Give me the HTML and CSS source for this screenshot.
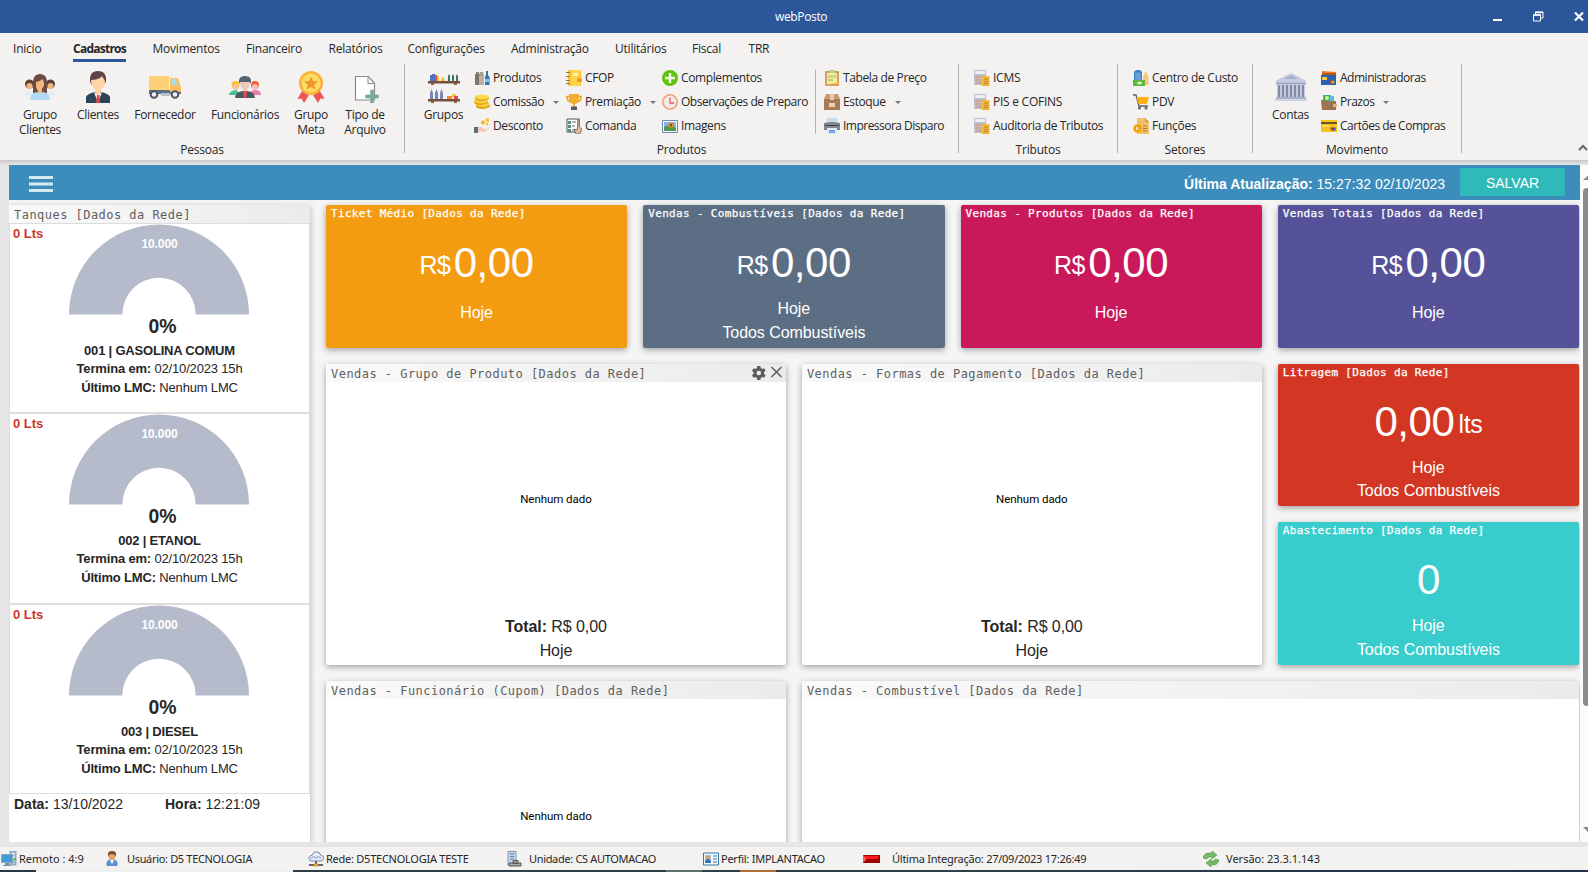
FILE: index.html
```html
<!DOCTYPE html>
<html lang="pt-BR">
<head>
<meta charset="utf-8">
<title>webPosto</title>
<link rel="stylesheet" href="styles.css">
</head>
<body>
<svg class="defs" width="0" height="0" aria-hidden="true">
  <symbol id="calc" viewBox="0 0 16 16"><rect width="12" height="15" rx="1" fill="#b9bfcb"/><rect x="1" y="1" width="10" height="3" fill="#eaf0f7"/><path d="M2 6h2v2H2zm3 0h2v2H5zm3 0h2v2H8zM2 9h2v2H2zm3 0h2v2H5zM2 12h2v2H2zm3 0h2v2H5z" fill="#d99a86"/><path d="M9 6h6.500v10H8V7z" fill="#f0b53a"/><path d="M10 9h4M10 11.500h4M10 13.500h4" stroke="#b88a3a"/></symbol>
  <symbol id="gauge" viewBox="0 0 182 91"><path d="M1 90.500a90 90 0 0 1 180 0h-53.300a36.700 36.700 0 0 0-73.400 0z" fill="#b5bbca"/></symbol>
</svg>
<header class="titlebar">
  <span class="app-name">webPosto</span>
  <svg class="win" width="94" height="12" viewBox="0 0 94 12"><path d="M0 8h9v2H0z" fill="#fff"/><path d="M42.500 3V1H50v6h-2M40.500 4h7v6h-7z" fill="none" stroke="#fff"/><path d="M40 4h8M42 1.500h8" stroke="#fff" stroke-width="1.500"/><path d="M82 1.500l8 8m0-8l-8 8" stroke="#fff" stroke-width="2.200"/></svg>
</header>
<nav class="tabs">
  <span>Inicio</span><span><b>Cadastros</b></span><span>Movimentos</span><span>Financeiro</span><span>Relatórios</span><span>Configurações</span><span>Administração</span><span>Utilitários</span><span>Fiscal</span><span>TRR</span>
</nav>
<section class="ribbon">
  <div class="group pessoas">
    <div class="tools">
      <div class="big"><svg viewBox="0 0 32 32"><circle cx="5.500" cy="13" r="4.500" fill="#5d4037"/><circle cx="5.500" cy="15" r="3" fill="#f2b880"/><path d="M1 25q0-5 5-5h4v5z" fill="#e6edf5"/><circle cx="26.500" cy="13" r="4.500" fill="#5d4037"/><circle cx="26.500" cy="15" r="3" fill="#f2b880"/><path d="M31 25q0-5-5-5h-4v5z" fill="#e6edf5"/><path d="M9 22V10q1-7 7-7t7 7v12z" fill="#6d4c41"/><path d="M12 11q5-1 6-3 2 1 2 5t-4 6-4-6zm2 6h4v5h-4z" fill="#f2b880"/><path d="M6 29q0-7 7-8 3 2 6 0 7 1 7 8z" fill="#b3daf5"/></svg><span>Grupo<br>Clientes</span></div>
      <div class="big"><svg viewBox="0 0 32 32"><path d="M8 11q-1-11 8-11t8 11l-3 3H10z" fill="#5d4545"/><path d="M9 9q8 0 11-4l3 5q0 6-4 8v6h-6v-6q-4-3-4-9z" fill="#ffd2a8"/><path d="M4 32v-6q1-3 9-5l3 4 3-4q8 2 9 5v6z" fill="#2d4356"/><path d="M12 21l4 11 4-11-4 3z" fill="#fff"/><path d="M15 24h2.500l.5 8h-4z" fill="#e8453c"/></svg><span>Clientes</span></div>
      <div class="big"><svg viewBox="0 0 32 32"><path d="M0 5h20v15H0z" fill="#ffd176"/><path d="M0 19h32v4H0z" fill="#5d7083"/><path d="M21 7h8l3 10v4H21z" fill="#ffbd5c"/><path d="M22.500 8h4.500l1 6h-5.500z" fill="#a9dcf5"/><circle cx="5" cy="23.500" r="3.300" fill="#eef" stroke="#4c5566" stroke-width="2"/><circle cx="26" cy="23.500" r="3.300" fill="#eef" stroke="#4c5566" stroke-width="2"/><path d="M12 22h9v3h-9z" fill="#b9bfcc"/></svg><span>Fornecedor</span></div>
      <div class="big"><svg viewBox="0 0 32 32"><circle cx="6.500" cy="14" r="4" fill="#fcc12d"/><circle cx="6.500" cy="16" r="3" fill="#eec2b4"/><path d="M0 24q0-4 7-5l6 5z" fill="#3fc48c"/><circle cx="26" cy="14" r="4" fill="#f4593b"/><circle cx="26" cy="16" r="3" fill="#eec2b4"/><path d="M20 24q2-5 6-5 6 0 6 5z" fill="#ef7cb5"/><path d="M10 12q-1-7 6-7t6 7z" fill="#53626c"/><path d="M11 11h10q0 5-3 7v4h-4v-4q-3-2-3-7z" fill="#edc7b7"/><path d="M6 27q0-6 8-7l2 2 2-2q8 1 8 7z" fill="#4b5662"/><path d="M14 20h4l-1 7h-2z" fill="#e94d4d"/></svg><span>Funcionários</span></div>
      <div class="big"><svg viewBox="0 0 32 32"><path d="M7 20L2.500 28l4-.5L9 32l5-8zM25 20l4.500 8-4-.5L23 32l-5-8z" fill="#eb5757"/><circle cx="16" cy="12" r="12" fill="#fbb13c"/><circle cx="16" cy="12" r="9.500" fill="#ffdb66"/><path d="M16 5.500l2 4.600 5 .4-3.800 3.200 1.200 4.900-4.400-2.600-4.400 2.600 1.200-4.900L9 10.500l5-.4z" fill="#ee962b"/></svg><span>Grupo<br>Meta</span></div>
      <div class="big"><svg viewBox="0 0 32 32"><path d="M6.500 5.500h13l6 7V29h-19z" fill="#fff" stroke="#8a8a8a" stroke-width="1.200"/><path d="M19 5.500v7h6.500" fill="none" stroke="#8a8a8a"/><path d="M21.500 19h3v5h5v3h-5v5h-3v-5h-5v-3h5z" fill="#76aa98" stroke="#76aa98" stroke-width=".6"/></svg><span>Tipo de<br>Arquivo</span></div>
    </div>
    <h2>Pessoas</h2>
  </div>
  <div class="group produtos">
    <div class="tools">
      <div class="big"><svg viewBox="0 0 32 32"><path d="M0 10h32v2.500H0zM0 28h32v2.500H0z" fill="#76503b"/><path d="M3 12h3v2H3zm23 0h3v2h-3zM3 30h3v2H3zm23 0h3v2h-3z" fill="#8d6249"/><path d="M2 4h3v6H2z" fill="#4a77cc"/><path d="M4 3h3v7H4z" fill="#4a77cc"/><path d="M7 4h2v6H7z" fill="#e64a4a"/><path d="M9 5h2v5H9z" fill="#f4c430"/><path d="M13 10l1-4h1l2 4z" fill="#f2b92b"/><path d="M20 10V5l1-2 1 2v5zm4 0V5l1-2 1 2v5zm4 0V5l1-2 1 2v5z" fill="#3e7562"/><path d="M2 28v-6l1.500-4L5 22v6zm5 0v-6l1.500-4 1.500 4v6zm5 0v-6l1.500-4 1.500 4v6z" fill="#7787bb"/><path d="M19 28v-3h5v3z" fill="#f28a37"/><path d="M24 26v-3h4v3z" fill="#f5c536"/><path d="M26 28v-3h4v3z" fill="#dd4b5a"/></svg><span>Grupos</span></div>
      <div class="stack c1">
        <div><svg viewBox="0 0 16 16"><path d="M1 4h5v11H1z" fill="#7b756b"/><path d="M2 2h3v2H2z" fill="#8b8579"/><path d="M5 6h5v9H5z" fill="#bcaea0"/><path d="M6 2h3l1 4H5z" fill="#a99d8f"/><path d="M11 15V7l1-2V1h2v4l1.500 2v8z" fill="#2f76b5"/><path d="M11 9h4v3h-4z" fill="#8cc1e8"/></svg>Produtos</div>
        <div><svg viewBox="0 0 16 16"><path d="M2 10v3q5 4 14 0v-3z" fill="#dca313"/><ellipse cx="9" cy="10.500" rx="7" ry="2.500" fill="#f9cf41"/><path d="M0 7v2q5 4 14 0V7z" fill="#dca313"/><ellipse cx="7" cy="7" rx="7" ry="2.500" fill="#f9cf41"/><path d="M1 3v2q5 4 14 0V3z" fill="#dca313"/><ellipse cx="8" cy="3" rx="7" ry="2.600" fill="#ffd84e"/></svg>Comissão<i></i></div>
        <div><svg viewBox="0 0 16 16"><path d="M0 9h4v6H0z" fill="#5d6b7a"/><path d="M4 9h3l3 2h2l4-2-5 5H4z" fill="#f8c9b5"/><circle cx="9" cy="4.500" r="2" fill="#f5b62e"/><circle cx="13.500" cy="2" r="1.900" fill="#f8c33c"/><circle cx="13" cy="6" r="1.200" fill="#f5b62e"/></svg>Desconto</div>
      </div>
      <div class="stack c2">
        <div><svg viewBox="0 0 16 16"><rect x="2" y="0" width="13" height="16" rx="1" fill="#fbc229"/><path d="M5 0h9v16H5z" fill="#ffd34c"/><path d="M7 3h5v3H7z" fill="#fff2b8"/><path d="M0 2h4v1H0zm0 4h4v1H0zm0 4h4v1H0zm0 3h4v1H0z" fill="#777"/><rect x="11" y="8" width="5" height="4" rx="1" fill="#f39c1f"/></svg>CFOP</div>
        <div><svg viewBox="0 0 16 16"><path d="M3 2.500H.8q0 5 4.700 5.500M13 2.500h2.200q0 5-4.700 5.500" fill="none" stroke="#eba32a" stroke-width="1.500"/><path d="M3 0h10v4q0 5-4 6v3H7v-3q-4-1-4-6z" fill="#f4ae2f"/><path d="M5 12.500h6V16H5z" fill="#565c63"/></svg>Premiação<i></i></div>
        <div><svg viewBox="0 0 16 16"><path d="M1 1h11v13H1z" fill="#fff" stroke="#47575e"/><path d="M2 3h3v3H2zm0 4h3v3H2zm0 4h3v3H2z" fill="#5d8c78"/><path d="M6 4h4M6 8h3M6 12h3" stroke="#666"/><path d="M12 6V1h1.500v8L16 11l-2 5h-4l-2-5 3 1z" fill="#e8bc9c" stroke="#555" stroke-width=".7"/></svg>Comanda</div>
      </div>
      <div class="stack c3">
        <div><svg viewBox="0 0 16 16"><circle cx="8" cy="8" r="8" fill="#5fc410"/><path d="M8 3v10M3 8h10" stroke="#f1fbe8" stroke-width="2.400"/></svg>Complementos</div>
        <div><svg viewBox="0 0 16 16"><circle cx="8" cy="8" r="7.200" fill="#f3e9e5" stroke="#f0a070" stroke-width="1.500"/><path d="M8 3.500V9h4" fill="none" stroke="#e06057" stroke-width="1.300"/></svg>Observações de Preparo</div>
        <div><svg viewBox="0 0 16 16"><path d="M.5 2.500h15v12H.5z" fill="#fff" stroke="#7284b4"/><path d="M2 4h12v9H2z" fill="#7db8e5"/><path d="M2 9q4-3 6 0 3-2 6 1v3H2z" fill="#4e9a48"/><circle cx="9" cy="7" r="2.700" fill="#e38628"/><circle cx="9" cy="7" r="1" fill="#613918"/></svg>Imagens</div>
      </div>
      <div class="stack c4">
        <div><svg viewBox="0 0 16 16"><rect x="1" y="1" width="14" height="15" rx="1" fill="#dc9e5d"/><path d="M3 3h10v11H3z" fill="#f6ee9f"/><path d="M5 0h6v3H5z" fill="#b5d38a"/><path d="M5 5v3m3-3v3m3-3v3M4 10h5" stroke="#7cac56"/><path d="M6 14l8-2v2z" fill="#f5c644"/></svg>Tabela de Preço</div>
        <div><svg viewBox="0 0 16 16"><path d="M0 5h16v11H0z" fill="#a97c58"/><path d="M2 0h12l2 5H0z" fill="#c89b76"/><path d="M6 0h4v6H6z" fill="#f0c9a8"/><path d="M5 9h6v4H5z" fill="#e8cfb6"/></svg>Estoque<i></i></div>
        <div><svg viewBox="0 0 16 16"><path d="M3 0h10v6H3z" fill="#c7ddf2"/><path d="M0 5q8-2 16 0v7H0z" fill="#83868c"/><path d="M1 7h14v1H1z" fill="#3f434a"/><path d="M3 10h10v6H3z" fill="#dceafa"/><path d="M5 12h6v3H5z" fill="#75a5e5"/></svg>Impressora Disparo</div>
      </div>
    </div>
    <h2>Produtos</h2>
  </div>
  <div class="group tributos">
    <div class="tools"><div class="stack">
      <div><svg><use href="#calc"/></svg>ICMS</div>
      <div><svg><use href="#calc"/></svg>PIS e COFINS</div>
      <div><svg><use href="#calc"/></svg>Auditoria de Tributos</div>
    </div></div>
    <h2>Tributos</h2>
  </div>
  <div class="group setores">
    <div class="tools"><div class="stack">
      <div><svg viewBox="0 0 16 16"><path d="M1 11V3q0-3 4-3t4 3v8z" fill="#3a7fc4"/><path d="M3 3v7m2-8v8m2-7v7" stroke="#a4cdf0" stroke-width=".8"/><path d="M10 15V7l2.500-6L15.500 7v8z" fill="#fac27a"/><path d="M0 10h12v6H0z" fill="#62b63c"/><path d="M4 13h5M6.500 11.500v3" stroke="#e9f6e3" stroke-width="1.300"/></svg>Centro de Custo</div>
      <div><svg viewBox="0 0 16 16"><path d="M0 1h3l3 11h9" fill="none" stroke="#566069" stroke-width="1.300"/><path d="M3.500 3H16l-2 7H5.500z" fill="#ffae13"/><circle cx="6.500" cy="14" r="1.500" fill="#5d6770"/><circle cx="13" cy="14" r="1.500" fill="#5d6770"/></svg>PDV</div>
      <div><svg viewBox="0 0 16 16"><path d="M4 0h8l4 4v12H4z" fill="#f1c06b"/><path d="M12 0v4h4z" fill="#d99c3e"/><path d="M10 8h4M10 10.500h4M10 13h4" stroke="#a67a3a"/><circle cx="4.500" cy="10.500" r="3" fill="none" stroke="#f6a000" stroke-width="2.600"/></svg>Funções</div>
    </div></div>
    <h2>Setores</h2>
  </div>
  <div class="group movimento">
    <div class="tools">
      <div class="big"><svg viewBox="0 0 32 32"><path d="M16 2l15 7.500v2H1v-2z" fill="#c6cde1"/><path d="M16 4l7 4H9z" fill="#a7b0ca"/><path d="M1 11.500h30v2H1z" fill="#9ba4be"/><path d="M2 13h28v13H2z" fill="#c3cade"/><path d="M4 14v12m4-12v12m4-12v12m4-12v12m4-12v12m4-12v12m4-12v12" stroke="#818ba6" stroke-width="2"/><path d="M1 26h30v2H1z" fill="#a9b2c8"/><path d="M0 28h32v2H0z" fill="#ccd3e2"/></svg><span>Contas</span></div>
      <div class="stack">
        <div><svg viewBox="0 0 16 16"><path d="M1 1l14 1v7H1z" fill="#ef7d22"/><path d="M1 3h14v2H1z" fill="#b8551a"/><path d="M0 5h15v10H0z" fill="#2d62ab"/><path d="M1 7h5v3H1z" fill="#f5cc42"/><circle cx="10" cy="12" r="1.500" fill="#e43c35"/><circle cx="12" cy="12" r="1.500" fill="#f3a62c"/></svg>Administradoras</div>
        <div><svg viewBox="0 0 16 16"><path d="M2 1h8v7H2z" fill="#34b67a"/><circle cx="6" cy="4" r="2" fill="#e4f46c"/><path d="M9 2h4v6H9z" fill="#63b9e6"/><path d="M0 6h3l1 1h11v9H1z" fill="#9a7453"/><path d="M12 10h4v3h-4z" fill="#d7b390"/></svg>Prazos<i></i></div>
        <div><svg viewBox="0 0 16 16"><path d="M0 2h16v12H0z" fill="#f4c31c"/><path d="M0 4h16v2H0z" fill="#6d5528"/><path d="M1 8h7" stroke="#fff0a0"/><circle cx="11" cy="11" r="1.800" fill="#e2432b"/><circle cx="13" cy="11" r="1.800" fill="#355fa8"/></svg>Cartões de Compras</div>
      </div>
    </div>
    <h2>Movimento</h2>
  </div>
  <svg class="collapse" width="10" height="8" viewBox="0 0 10 8"><path d="M1 6l4-4 4 4" fill="none" stroke="#666" stroke-width="2"/></svg>
</section>
<div class="workspace">
  <main>
    <div class="bar">
      <svg width="24" height="16"><path d="M0 0h24v3H0zM0 6.500h24v3H0zM0 13h24v3H0z" fill="#d8e8f1"/></svg>
      <p><b>Última Atualização:</b> 15:27:32 02/10/2023</p>
      <button>SALVAR</button>
    </div>
    <div class="board">
      <aside class="tanks">
        <h3>Tanques [Dados da Rede]</h3>
        <div class="tank"><em>0 Lts</em><svg><use href="#gauge"/></svg><small>10.000</small><strong>0%</strong><b>001 | GASOLINA COMUM</b><p><b>Termina em:</b> 02/10/2023 15h</p><p><b>Último LMC:</b> Nenhum LMC</p></div>
        <div class="tank"><em>0 Lts</em><svg><use href="#gauge"/></svg><small>10.000</small><strong>0%</strong><b>002 | ETANOL</b><p><b>Termina em:</b> 02/10/2023 15h</p><p><b>Último LMC:</b> Nenhum LMC</p></div>
        <div class="tank"><em>0 Lts</em><svg><use href="#gauge"/></svg><small>10.000</small><strong>0%</strong><b>003 | DIESEL</b><p><b>Termina em:</b> 02/10/2023 15h</p><p><b>Último LMC:</b> Nenhum LMC</p></div>
        <div class="clock"><span><b>Data:</b> 13/10/2022</span><span><b>Hora:</b> 12:21:09</span></div>
      </aside>
      <div class="cards">
        <article class="metric orange"><h4>Ticket Médio [Dados da Rede]</h4><div class="value"><sup>R$</sup>0,00</div><p>Hoje</p></article>
        <article class="metric slate two"><h4>Vendas - Combustíveis [Dados da Rede]</h4><div class="value"><sup>R$</sup>0,00</div><p>Hoje<br>Todos Combustíveis</p></article>
        <article class="metric pink"><h4>Vendas - Produtos [Dados da Rede]</h4><div class="value"><sup>R$</sup>0,00</div><p>Hoje</p></article>
        <article class="metric purple"><h4>Vendas Totais [Dados da Rede]</h4><div class="value"><sup>R$</sup>0,00</div><p>Hoje</p></article>
        <article class="panel tall"><h3>Vendas - Grupo de Produto [Dados da Rede]
          <svg width="31" height="14" viewBox="0 0 31 14"><path d="M5.300 0h3l.5 2.100 1.300.8 2-.7 1.500 2.600-1.600 1.400v1.600l1.600 1.400-1.500 2.600-2-.7-1.300.8-.5 2.100h-3l-.5-2.100-1.300-.8-2 .7L0 9.200l1.600-1.400V6.200L0 4.800l1.500-2.600 2 .7 1.300-.8zM6.800 4.700a2.300 2.300 0 1 0 0 4.600 2.300 2.300 0 0 0 0-4.600z" fill="#5c5c5c" fill-rule="evenodd"/><path d="M19.500 1l10 10m0-10l-10 10" stroke="#5c5c5c" stroke-width="1.500"/></svg></h3>
          <div class="empty">Nenhum dado</div><p><b>Total:</b> R$ 0,00<br>Hoje</p></article>
        <article class="panel tall"><h3>Vendas - Formas de Pagamento [Dados da Rede]</h3><div class="empty">Nenhum dado</div><p><b>Total:</b> R$ 0,00<br>Hoje</p></article>
        <article class="metric red two"><h4>Litragem [Dados da Rede]</h4><div class="value">0,00<sup>lts</sup></div><p>Hoje<br>Todos Combustíveis</p></article>
        <article class="metric teal two"><h4>Abastecimento [Dados da Rede]</h4><div class="value">0</div><p>Hoje<br>Todos Combustíveis</p></article>
        <article class="panel tall"><h3>Vendas - Funcionário (Cupom) [Dados da Rede]</h3><div class="empty">Nenhum dado</div></article>
        <article class="panel wide"><h3>Vendas - Combustível [Dados da Rede]</h3></article>
      </div>
    </div>
  </main>
  <div class="scroll"><svg width="8" height="5"><path d="M3 5l6-5v5z" fill="#888"/></svg><div class="thumb"></div><svg width="8" height="5"><path d="M3 0h6v6z" fill="#888"/></svg></div>
</div>
<footer class="status">
  <span><svg viewBox="0 0 16 16"><path d="M9 0h6v14H9z" fill="#a9bdd2" stroke="#6e88a5" stroke-width=".7"/><path d="M10 3h4M10 6h4" stroke="#fff"/><path d="M.5 3.500h11v8H.5z" fill="#419bd9" stroke="#8fa5ba"/><path d="M4 12h4v2h2v1H2v-1h2z" fill="#7891aa"/><path d="M13 7h1.500v2H13z" fill="#35be35"/></svg>Remoto : 4:9</span>
  <span><svg viewBox="0 0 16 16"><path d="M3 14.500q-1-6 5-6t5 6z" fill="#5597d8" stroke="#336b9f" stroke-width=".6"/><path d="M6 9h4l-2 4z" fill="#fff"/><circle cx="8" cy="5" r="3.700" fill="#e5a56a"/><path d="M4 5q-1-5 4-5t4 5q-2-2-5-2z" fill="#80502a"/></svg>Usuário: D5 TECNOLOGIA</span>
  <span><svg viewBox="0 0 16 16"><path d="M3 10q-3-1-2-3.500Q2 4 4 4.500q1-4 5-3.500 3 0 3.500 3Q16 4.500 15.500 7.500q-.5 2.500-3 2.500z" fill="#e5eafa" stroke="#7685b0"/><path d="M3 8q2-4 5-1 2-3 5 0" fill="none" stroke="#8996bf"/><path d="M8 10v3M1 14h14" stroke="#666" stroke-width="2"/><path d="M6 12.500h4v3H6z" fill="#ec9a28"/></svg>Rede: D5TECNOLOGIA TESTE</span>
  <span><svg viewBox="0 0 16 16"><path d="M2 .5h8V14H2z" fill="#c5d5e7" stroke="#8399b2"/><path d="M4 3h4M4 5.500h4M4 8h4" stroke="#5c7da2"/><path d="M3 12h12v3H3zM7 9.500h5v3H7z" fill="#aaa" stroke="#555"/></svg>Unidade: CS AUTOMACAO</span>
  <span><svg viewBox="0 0 16 16"><path d="M.5 2h15v12H.5z" fill="#f4f8fc" stroke="#347caa"/><path d="M2 4h6v8H2z" fill="#9fc8ec"/><circle cx="5" cy="6.500" r="2" fill="#dc9652"/><path d="M2 12q0-4 3-4t3 4z" fill="#2e74b8"/><path d="M10 5h4M10 8h4M10 11h4" stroke="#4b7090"/></svg>Perfil: IMPLANTACAO</span>
  <span><svg class="led" viewBox="0 0 17 8"><path d="M0 0h17v8H0z" fill="#9c0000"/><path d="M1 1h15l-2 3H3z" fill="#ff1a1a"/><path d="M0 0l3 3v2L0 8z" fill="#f55"/></svg>Última Integração: 27/09/2023 17:26:49</span>
  <span><svg viewBox="0 0 16 16"><path d="M0 7q1-5 6-5h3V0l5 4-5 4V6H7Q4 6 4 8z" fill="#72bb67" stroke="#3d873a" stroke-width=".5"/><path d="M16 9q-1 5-6 5H8v2l-5-4 5-4v2h1q3 0 3-2z" fill="#72bb67" stroke="#3d873a" stroke-width=".5"/></svg>Versão: 23.3.1.143</span>
</footer>
<div class="taskbar"></div>
</body>
</html>
```
FILE: styles.css
```css
* { box-sizing: border-box; }
body { margin: 0; width: 1588px; height: 872px; overflow: hidden; display: flex; flex-direction: column; background: #e6e6e6; color: #262626; font: 12px/15px "Open Sans", sans-serif; }
h2, h3, h4, p { margin: 0; font-weight: normal; }
svg { display: block; flex: none; }
.defs { position: absolute; }
.titlebar { height: 33px; flex: none; background: #2b579a; color: #fff; display: grid; grid-template-columns: 1493px 95px; align-items: center; }
.app-name { padding-left: 775px; letter-spacing: -.35px; }
.win { margin-top: 1px; }
.tabs { height: 31px; flex: none; background: #f3f2f1; padding: 8px 0 0 13px; display: grid; grid-template-columns: 60px 79.500px 93.500px 82.500px 79px 103.500px 104px 77px 56.500px 40px; white-space: nowrap; letter-spacing: -.22px; }
.tabs b { display: inline-block; height: 21px; width: 53px; border-bottom: 3px solid #2b579a; letter-spacing: -.75px; }
.ribbon { height: 96px; flex: none; background: #f3f2f1; display: flex; position: relative; white-space: nowrap; letter-spacing: -.2px; }
.group { height: 89px; border-right: 1px solid #b4b4b4; display: flex; flex-direction: column; }
.group h2 { font-size: 12px; line-height: 15px; text-align: center; margin-top: auto; margin-bottom: -4px; }
.tools { display: flex; height: 76px; padding-top: 7px; }
.big { display: flex; flex-direction: column; align-items: center; text-align: center; flex: none; letter-spacing: -.3px; }
.big svg { width: 32px; height: 32px; margin-bottom: 4px; }
.pessoas { width: 405px; }
.pessoas .tools { display: grid; grid-template-columns: 80px 36px 98px 62px 70px 38px; }
.pessoas .big { width: 80px; justify-self: center; }
.stack { display: flex; flex-direction: column; gap: 8px; flex: none; margin-top: -1px; letter-spacing: -.38px; }
.stack > div { display: flex; align-items: center; height: 16px; gap: 3px; line-height: 14px; padding-bottom: 1px; }
.stack svg { width: 16px; height: 16px; margin-top: 1px; }
.stack i { border: 3px solid transparent; border-top-color: #777; border-bottom: 0; margin: 1px 0 0 6px; }
.produtos { width: 554px; }
.produtos .tools { display: grid; grid-template-columns: 69px 92px 96px 153px 144px; }
.produtos .big { width: 77px; }
.produtos .c3 > :nth-child(2) { letter-spacing: -.48px; }
.produtos .c4 { padding-left: 8px; border-left: 1px solid #b4b4b4; height: 64px; }
.produtos .c4 > :last-child { letter-spacing: -.52px; }
.tributos { width: 159px; }
.tributos .stack { margin-left: 15px; }
.tributos .stack > :first-child, .tributos .stack > :nth-child(2) { letter-spacing: -.25px; }
.setores { width: 135px; }
.setores .stack { margin-left: 15px; letter-spacing: -.3px; }
.movimento { width: 209px; }
.movimento .big { width: 68px; padding-left: 7px; }
.movimento .stack { letter-spacing: -.48px; }
.collapse { position: absolute; right: 0; bottom: 8px; }
.workspace { height: 687px; flex: none; display: flex; padding: 5px 0 5px 9px; background: linear-gradient(#c9c9c9, #e6e6e6 5px); }
main { width: 1571px; height: 677px; background: #f5f5f5; overflow: hidden; font-family: "Liberation Sans", sans-serif; }
.bar { height: 35px; background: #3c8dbc; color: #fff; display: flex; align-items: center; padding: 0 15px 0 20px; font-size: 14px; }
.bar svg { margin-top: 2px; }
.bar p { margin-left: auto; padding-top: 3px; }
.bar button { width: 105px; height: 28px; margin: 0 0 2px 15px; padding: 2px 0 0; border: 0; border-radius: 2px; background: #2fbab9; color: #fff; font: 14px "Liberation Sans", sans-serif; }
.board { display: grid; grid-template-columns: 301px 1253px; column-gap: 16px; padding-top: 5px; }
h3 { height: 18px; padding: 2px 5px 0; font: 12px/16px "DejaVu Sans Mono", monospace; letter-spacing: .465px; color: #606060; background: linear-gradient(90deg, #fafafa, #ebebeb); display: flex; justify-content: space-between; white-space: nowrap; }
h3 svg { margin: 0 -2px 0 0; }
.tanks { height: 637px; background: #fff; box-shadow: 0 2px 6px rgba(0, 0, 0, .3); }
.tank { position: relative; height: 190.300px; border: 1px solid #ddd; display: flex; flex-direction: column; align-items: center; font-size: 13px; line-height: 19px; }
.tank > svg { width: 182px; height: 91px; margin-left: -2px; }
.tank em { position: absolute; left: 3px; top: 0; font-style: normal; font-weight: bold; color: #d0342a; }
.tank small { position: absolute; top: 11px; font-size: 12px; font-weight: bold; color: #fff; letter-spacing: -.1px; }
.tank strong { font-size: 20px; line-height: 24px; margin: -1px 0 3px 6px; transform: scaleX(.97); }
.tank > b { letter-spacing: -.2px; }
.tank p { letter-spacing: -.17px; position: relative; top: -1px; }
.clock { display: grid; grid-template-columns: 151px 1fr; padding: 3px 0 0 5px; font-size: 14px; }
.cards { display: grid; grid-template-columns: repeat(8, minmax(0, 1fr)); grid-auto-rows: 142.670px; gap: 16px; }
.metric, .panel { box-shadow: 0 2px 6px rgba(0, 0, 0, .35); border-radius: 2px; text-align: center; }
.metric { grid-column: span 2; color: #fff; font-size: 16px; line-height: 23.500px; letter-spacing: -.06px; }
h4 { font: 11px/18px "DejaVu Sans Mono", monospace; letter-spacing: .33px; text-align: left; padding-left: 5px; white-space: nowrap; -webkit-text-stroke: .25px; }
.value { font-size: 42px; line-height: 48px; margin-top: 16px; height: 62px; letter-spacing: -.4px; }
.value sup { font-size: 25px; line-height: 1; vertical-align: 3px; margin-right: 3px; }
.red .value sup { margin: 0 0 0 4px; vertical-align: 3px; }
.two p { margin-top: -4px; }
.orange { background: #f39c12; }
.slate { background: #5b6e84; }
.pink { background: #ca195a; }
.purple { background: #555299; }
.red { background: #d33724; }
.teal { background: #39cccc; }
.panel { grid-column: span 3; grid-row: span 2; background: #fff; display: flex; flex-direction: column; font-size: 16px; line-height: 24px; letter-spacing: -.08px; }
.wide { grid-column: span 5; }
.empty { flex: none; padding-top: 105px; height: 233px; font: 11.500px/24px Roboto, sans-serif; letter-spacing: -.05px; color: #000; }
.scroll { width: 8px; height: 677px; background: #fbfbfb; display: flex; flex-direction: column; align-items: flex-end; padding: 10px 0; }
.thumb { width: 5px; height: 518px; margin: 8px 0 auto; background: #8b8b8b; border-radius: 4px 0 0 4px; }
.status { height: 23px; flex: none; background: #f3f2f1; display: grid; grid-template-columns: 103px 204px 198px 197px 160px 340px 1fr; padding-left: 1px; align-items: center; font: 11px/14px "Noto Sans", sans-serif; letter-spacing: -.25px; white-space: nowrap; }
.status span { display: flex; align-items: center; gap: 2px; }
.status svg { width: 16px; height: 16px; }
.status span:first-child { letter-spacing: 0; }
.status span:nth-child(2), .status span:nth-child(4), .status span:nth-child(7) { gap: 7px; }
.status span:nth-child(2), .status span:nth-child(4) { letter-spacing: -.33px; }
.status span:nth-child(7) { letter-spacing: 0; }
.status span:nth-child(6) { gap: 12px; }
.status .led { width: 17px; height: 8px; }
.taskbar { height: 2px; flex: none; background: linear-gradient(90deg, #263845 36px, #efefef 36px 293px, #2e4047 293px 666px, #5c706d 666px 702px, #2e4047 702px 740px, #b06f35 740px 776px, #2e4047 776px 1000px, #222f4b); }
```
